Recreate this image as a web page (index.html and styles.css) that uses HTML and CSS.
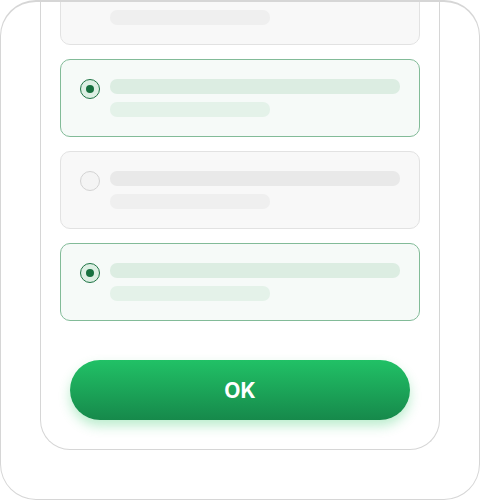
FILE: index.html
```html
<!DOCTYPE html>
<html lang="en">
<head>
  <meta charset="UTF-8">
  <title>Choose option</title>
  <link rel="stylesheet" href="styles.css">
</head>
<body>

<div class="device">
  <div class="screen">
    <div class="option peek">
      <span class="radio"></span>
      <div class="lines">
        <span class="line long"></span>
        <span class="line short"></span>
      </div>
    </div>

    <div class="option selected">
      <span class="radio"></span>
      <div class="lines">
        <span class="line long"></span>
        <span class="line short"></span>
      </div>
    </div>

    <div class="option">
      <span class="radio"></span>
      <div class="lines">
        <span class="line long"></span>
        <span class="line short"></span>
      </div>
    </div>

    <div class="option selected">
      <span class="radio"></span>
      <div class="lines">
        <span class="line long"></span>
        <span class="line short"></span>
      </div>
    </div>

    <button class="ok-btn">OK</button>
  </div>
</div>

</body>
</html>
```

FILE: styles.css
```css
* {
  box-sizing: border-box;
}

body {
  margin: 0;
  background: #ffffff;
  font-family: 'Inter', 'Liberation Sans', sans-serif;
}

.device {
  width: 480px;
  height: 500px;
  border: 1px solid #d6d6d6;
  border-top-width: 2px;
  border-radius: 36px;
  overflow: hidden;
  background: #ffffff;
}

.screen {
  width: 400px;
  margin: -35px 39px 0;
  padding: 0 19px 29px;
  border: 1px solid #d6d6d6;
  border-top: none;
  border-radius: 0 0 30px 30px;
  display: flex;
  flex-direction: column;
  gap: 14px;
}

.option {
  display: flex;
  align-items: flex-start;
  gap: 10px;
  height: 78px;
  padding: 19px 19px;
  border: 1px solid #e2e2e2;
  border-radius: 10px;
  background: #f8f8f8;
}

/* first card is scrolled mostly out of view */
.option.peek .radio,
.option.peek .line.long {
  visibility: hidden;
}

.radio {
  width: 20px;
  height: 20px;
  flex-shrink: 0;
  border-radius: 50%;
  border: 1px solid #d3d3d3;
  background: #f4f4f4;
  display: flex;
  align-items: center;
  justify-content: center;
}

.lines {
  flex: 1;
  display: flex;
  flex-direction: column;
  gap: 8px;
}

.line {
  display: block;
  height: 15px;
  border-radius: 7px;
  background: #e9e9e9;
}

.line.short {
  width: 160px;
  background: #efefef;
}

.option.selected {
  border-color: #82bb98;
  background: #f6faf8;
}

.option.selected .radio {
  border-color: #1f7445;
  background: #dcefe3;
}

.option.selected .radio::after {
  content: '';
  width: 8px;
  height: 8px;
  border-radius: 50%;
  background: #17703f;
}

.option.selected .line.long {
  background: #dcede2;
}

.option.selected .line.short {
  background: #e4f2e9;
}

.ok-btn {
  margin: 25px 10px 0;
  height: 60px;
  border: none;
  border-radius: 30px;
  background: linear-gradient(180deg, #21c166 0%, #16894b 100%);
  box-shadow: 0 6px 12px rgba(34, 197, 94, 0.3);
  color: #ffffff;
  font-family: 'Inter', 'Liberation Sans', sans-serif;
  font-size: 21px;
  font-weight: 700;
  cursor: pointer;
}
```
